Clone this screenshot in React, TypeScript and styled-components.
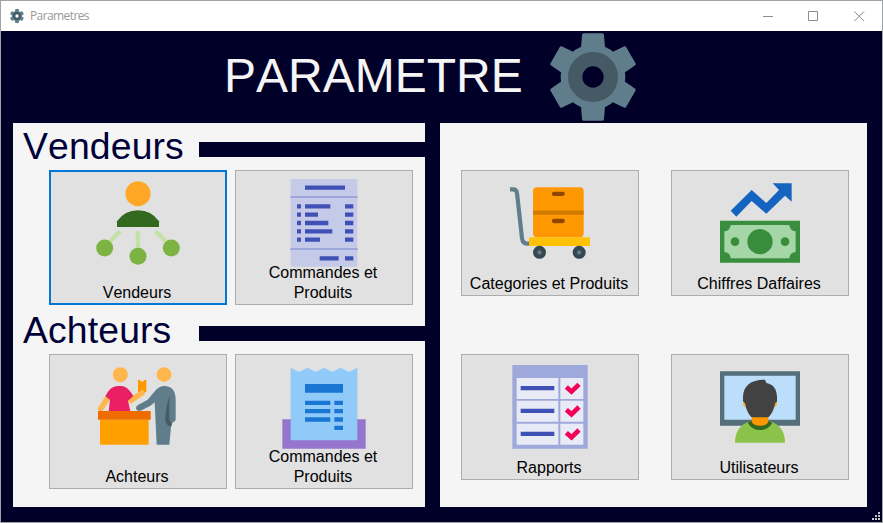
import React from 'react';
import styled, { createGlobalStyle } from 'styled-components';

const NAVY = '#000028';
const PAPER = '#f5f5f5';

const GlobalStyle = createGlobalStyle`
  * { box-sizing: border-box; }
  html, body, #root { height: 100%; margin: 0; }
  body { overflow: hidden; font-family: "Liberation Sans", Arial, sans-serif; }
`;

const Window = styled.div`
  width: 883px;
  height: 523px;
  border: 1px solid #a0a4a4;
  background: ${NAVY};
  display: flex;
  flex-direction: column;
  position: relative;
`;

const TitleBar = styled.header`
  height: 30px;
  flex: none;
  background: #fff;
  display: flex;
  align-items: center;
  padding-left: 9px;
`;

const WindowTitle = styled.span`
  margin-left: 6px;
  font: 12px/16px "Open Sans", "Noto Sans", sans-serif;
  letter-spacing: -0.6px;
  color: #999;
  flex: 1;
`;

const WindowControls = styled.div`
  display: flex;
  color: #8c8c8c;
`;

const ControlButton = styled.button`
  width: 45.5px;
  height: 28px;
  padding: 0;
  border: 0;
  background: transparent;
  color: inherit;
  display: grid;
  place-items: center;
  svg { display: block; }
`;

const Banner = styled.div`
  height: 92px;
  flex: none;
  display: flex;
  align-items: flex-start;
  padding: 2px 0 0 223px;
`;

const BannerTitle = styled.h1`
  margin: 15px 0 0;
  width: 325px;
  font-size: 48px;
  line-height: 55px;
  font-weight: 400;
  font-kerning: none;
  color: #f5f5f5;
`;

const Panels = styled.main`
  display: flex;
  gap: 15px;
  padding-left: 12px;
  height: 384px;
`;

const Panel = styled.section<{ $width: number }>`
  width: ${(p) => p.$width}px;
  height: 384px;
  background: ${PAPER};
`;

const SectionHead = styled.div<{ $gap?: number }>`
  height: 47px;
  margin-top: ${(p) => p.$gap ?? 0}px;
  display: flex;
  padding-left: 10px;
`;

const SectionTitle = styled.h2`
  margin: 2px 0 0;
  width: 176px;
  font-size: 37.33px;
  line-height: 43px;
  font-weight: 400;
  font-kerning: none;
  letter-spacing: 0.14px;
  color: #000038;
`;

const SectionRule = styled.div`
  flex: 1;
  height: 15px;
  margin-top: 19px;
  background: ${NAVY};
`;

const ButtonRow = styled.div<{ $gap: number; $left: number; $top?: number }>`
  display: flex;
  gap: ${(p) => p.$gap}px;
  padding: ${(p) => p.$top ?? 0}px 0 0 ${(p) => p.$left}px;
`;

const TileButton = styled.button<{ $height: number; $focused?: boolean }>`
  width: 178px;
  height: ${(p) => p.$height}px;
  padding: 0;
  border: 0;
  background: #e1e1e1;
  box-shadow: inset 0 0 0 ${(p) => (p.$focused ? '2px #0078d7' : '1px #adadad')};
  display: grid;
  grid-template: 100% / 100%;
  color: #000;
  font: 16px/20px "Liberation Sans", Arial, sans-serif;
  font-kerning: none;
`;

const TileIcon = styled.svg`
  grid-area: 1 / 1;
  align-self: start;
  justify-self: center;
  width: 100px;
  height: 100px;
`;

const TileLabel = styled.span`
  grid-area: 1 / 1;
  align-self: end;
  justify-self: center;
  white-space: pre-line;
  padding: 0 2px 2px 0;
`;

const SizeGrip = styled.svg`
  position: absolute;
  right: 2px;
  bottom: 2px;
`;

const Gear = ({ size }: { size: number }) => (
  <svg width={size} height={size} viewBox="-132 -132 264 264">
    <g fill="#607d8b">
      {[0, 60, 120, 180, 240, 300].map((a) => (
        <path
          key={a}
          transform={`rotate(${a})`}
          d="M-36-88L-33-126Q-33-131-28-131H28Q33-131 33-126L36-88L0-60Z"
        />
      ))}
      <path
        fillRule="evenodd"
        d="M0-97A97 97 0 1 1 0 97A97 97 0 1 1 0-97ZM0-50A50 50 0 1 0 0 50A50 50 0 1 0 0-50Z"
      />
    </g>
    <circle r="53.5" fill="none" stroke="#455a64" strokeWidth="43" />
  </svg>
);

const SellersIcon = () => (
  <TileIcon viewBox="144 15 300 300">
    <path d="M241 197L200 240M294 197V270M346 197L388 240" stroke="#c5e1a5" strokeWidth="13" fill="none" />
    <path d="M220 180H368V197.500H220Z" fill="#e1e1e1" />
    <circle cx="294" cy="86" r="37.500" fill="#ffa726" />
    <path d="M231 186V169Q254 136 294 136T357 169V186Z" fill="#33691e" />
    <g fill="#7cb342">
      <circle cx="194" cy="249" r="25.500" />
      <circle cx="294" cy="274" r="25.500" />
      <circle cx="394" cy="249" r="25.500" />
    </g>
  </TileIcon>
);

const OrderListIcon = () => (
  <TileIcon viewBox="132 15 300 300">
    <path d="M182 42H382V305H182Z" fill="#c5cae9" />
    <path d="M181 96H383M181 252H383" stroke="#9fa8da" strokeWidth="6" />
    <path
      d="M225 68H345M201 124H213M201 149H213M201 174H213M201 199H213M201 224H213M225 124H301M225 149H264M225 174H295M225 199H307M225 224H270M345 124H370M345 149H370M345 174H370M345 199H370M345 224H370M269 280H326M345 280H370"
      stroke="#3f51b5"
      strokeWidth="13"
    />
  </TileIcon>
);

const TrolleyIcon = () => (
  <TileIcon viewBox="135 15 300 300">
    <path d="M165 73H174Q185 73 186 84L201 220Q203 236 216 236H224" fill="none" stroke="#607d8b" strokeWidth="12.500" />
    <rect x="234" y="67" width="152" height="150" rx="12" fill="#ff9800" />
    <path d="M234 143H386" stroke="#d17a00" strokeWidth="13" />
    <path d="M297 86.500H323M297 168H323" stroke="#8f4700" strokeWidth="13" strokeLinecap="round" />
    <path d="M222 217H405V243H222Z" fill="#ffc107" />
    <g fill="#607d8b" stroke="#37474f" strokeWidth="13">
      <circle cx="253.500" cy="262" r="13" />
      <circle cx="372.500" cy="262" r="13" />
    </g>
  </TileIcon>
);

const RevenueIcon = () => (
  <TileIcon viewBox="135 15 300 300">
    <path d="M197 137L260 75L304 114L342 75L323 55H380V110L360 92L304 146L260 108L214 155Z" fill="#1565c0" />
    <path d="M165 167H405V293H165Z" fill="#388e3c" />
    <path
      d="M197 180H373A19 19 0 0 0 392 199V261A19 19 0 0 0 373 280H197A19 19 0 0 0 178 261V199A19 19 0 0 0 197 180Z"
      fill="#a5d6a7"
    />
    <g fill="#388e3c">
      <circle cx="285" cy="230" r="38" />
      <circle cx="210" cy="230" r="13" />
      <circle cx="360" cy="230" r="13" />
    </g>
  </TileIcon>
);

const BuyersIcon = () => (
  <TileIcon viewBox="144 12 300 300">
    <path d="M294 90L300 90Q306 101 313 90L319 90V126H294Z" fill="#ff9800" />
    <g fill="#ffb74d">
      <circle cx="241" cy="74" r="22.500" />
      <circle cx="372" cy="74" r="22" />
    </g>
    <path d="M203 143L182 176M273 151L306 129" stroke="#ffb74d" strokeWidth="17" strokeLinecap="round" />
    <path d="M206 184L210 149L196 139Q211 108 232 108H246Q262 108 280 138L264 152L271 184Z" fill="#e91e63" />
    <path
      d="M350 284L344 157Q337 163 330 168L300 183Q290 184 288 175Q288 168 294 165L323 149L343 125Q356 108 373 108Q407 108 407 151V209Q406 216 398 217L393 230L388 284Z"
      fill="#607d8b"
    />
    <path d="M388 139V209Q389 217 396 217L393 230Q374 224 376 207Q377 175 388 139Z" fill="#455a64" />
    <path d="M180 209H326V284H180Z" fill="#ffa000" />
    <path d="M174 183H332V209H174Z" fill="#ef6c00" />
  </TileIcon>
);

const ReceiptIcon = () => (
  <TileIcon viewBox="132 12 300 300">
    <path d="M157 208H407V296H157Z" fill="#9575cd" />
    <path d="M182 271V53L207 66L232 53L257 66L282 53L307 66L332 53L357 66L382 53V271Z" fill="#90caf9" />
    <path d="M225 102H339V128H225Z" fill="#1976d2" />
    <path
      d="M225 158.500H301M225 183.500H301M225 208.500H301M313 158.500H339M313 183.500H339M313 208.500H339M313 233.500H339"
      stroke="#1976d2"
      strokeWidth="13"
    />
  </TileIcon>
);

const ReportIcon = () => (
  <TileIcon viewBox="135 12 300 300">
    <path d="M172 45H398V296H172Z" fill="#9fa8da" />
    {[84, 152, 221].map((y) => (
      <g key={y}>
        <path d={`M185 ${y}H310V${y + 63}H185ZM316 ${y}H385V${y + 63}H316Z`} fill="#e8eaf6" />
        <path d={`M197 ${y + 30.5}H298`} stroke="#3f51b5" strokeWidth="13" />
        <path d={`M334 ${y + 27}L349.500 ${y + 41}L372 ${y + 19}`} fill="none" stroke="#f50057" strokeWidth="14" />
      </g>
    ))}
  </TileIcon>
);

const UserIcon = () => (
  <TileIcon viewBox="135 12 300 300">
    <path d="M165 64H405V227H165Z" fill="#546e7a" />
    <path d="M178 77H392V209H178Z" fill="#bbdefb" />
    <circle cx="243" cy="162" r="8.500" fill="#ffa726" />
    <circle cx="327" cy="162" r="8.500" fill="#ffa726" />
    <path d="M210 278Q210 229 252 215H318Q360 229 360 278Z" fill="#8bc34a" />
    <path d="M248 218Q255 214 263 212H307Q316 214 322 219Q309 240 285 240T248 218Z" fill="#33691e" />
    <path d="M260 199H310V215Q304 227 285 227T260 215Z" fill="#ff9800" />
    <path d="M234 140C235 107 258 88 300 89L304 99C326 103 336 119 336 143V155L330 160C328 178 319 194 310 202H260C252 193 243 180 241 161L234 154Z" fill="#424242" />
  </TileIcon>
);

type TileProps = { icon: React.ReactNode; label: string; height: number; focused?: boolean };

const Tile = ({ icon, label, height, focused }: TileProps) => (
  <TileButton $height={height} $focused={focused}>
    {icon}
    <TileLabel>{label}</TileLabel>
  </TileButton>
);

export default function App() {
  return (
    <>
      <GlobalStyle />
      <Window>
        <TitleBar>
          <Gear size={14} />
          <WindowTitle>Parametres</WindowTitle>
          <WindowControls>
            <ControlButton aria-label="Minimize">
              <svg width="11" height="11"><path d="M0 5.500H10" stroke="currentColor" /></svg>
            </ControlButton>
            <ControlButton aria-label="Maximize">
              <svg width="11" height="11"><path d="M.5.5H9.500V9.500H.5Z" stroke="currentColor" fill="none" /></svg>
            </ControlButton>
            <ControlButton aria-label="Close">
              <svg width="11" height="11"><path d="M.5.5L10 10M10 .5L.5 10" stroke="currentColor" /></svg>
            </ControlButton>
          </WindowControls>
        </TitleBar>
        <Banner>
          <BannerTitle>PARAMETRE</BannerTitle>
          <Gear size={88} />
        </Banner>
        <Panels>
          <Panel $width={412}>
            <SectionHead>
              <SectionTitle>Vendeurs</SectionTitle>
              <SectionRule />
            </SectionHead>
            <ButtonRow $gap={8} $left={36}>
              <Tile icon={<SellersIcon />} label="Vendeurs" height={135} focused />
              <Tile icon={<OrderListIcon />} label={'Commandes et\nProduits'} height={135} />
            </ButtonRow>
            <SectionHead $gap={2}>
              <SectionTitle>Achteurs</SectionTitle>
              <SectionRule />
            </SectionHead>
            <ButtonRow $gap={8} $left={36}>
              <Tile icon={<BuyersIcon />} label="Achteurs" height={135} />
              <Tile icon={<ReceiptIcon />} label={'Commandes et\nProduits'} height={135} />
            </ButtonRow>
          </Panel>
          <Panel $width={427}>
            <ButtonRow $gap={32} $left={21} $top={47}>
              <Tile icon={<TrolleyIcon />} label="Categories et Produits" height={126} />
              <Tile icon={<RevenueIcon />} label="Chiffres Daffaires" height={126} />
            </ButtonRow>
            <ButtonRow $gap={32} $left={21} $top={58}>
              <Tile icon={<ReportIcon />} label="Rapports" height={126} />
              <Tile icon={<UserIcon />} label="Utilisateurs" height={126} />
            </ButtonRow>
          </Panel>
        </Panels>
        <SizeGrip width="8" height="8" fill="#c8c8c8">
          <path d="M6 0h2v2h-2ZM3 3h2v2h-2ZM6 3h2v2h-2ZM0 6h2v2h-2ZM3 6h2v2h-2ZM6 6h2v2h-2Z" />
        </SizeGrip>
      </Window>
    </>
  );
}
